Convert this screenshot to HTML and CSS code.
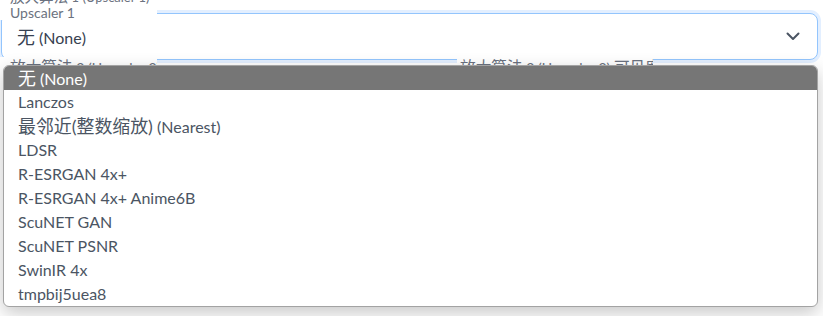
FILE: index.html
```html
<!DOCTYPE html>
<html lang="zh-CN">
<head>
    <meta charset="UTF-8">
    <title>Upscaler</title>
    <link rel="stylesheet" href="styles.css">
</head>
<body>
    <div class="field">
        <div class="label label-top">
            <span class="label-cut"><span class="cjk">放大算法</span> 1 (Upscaler 1)</span>
            <span class="label-name">Upscaler 1</span>
        </div>

        <div class="select">
            <span class="value"><span class="cjk">无</span> (None)</span>
            <svg class="chevron" width="14" height="9" viewBox="0 0 14 9">
                <path d="M1.5 1.5 L7 7 L12.5 1.5" fill="none" stroke="#4b5563" stroke-width="2" stroke-linecap="round" stroke-linejoin="round"/>
            </svg>
        </div>

        <div class="label label-left"><span class="cjk">放大算法</span> 2 (Upscaler 2)</div>
        <div class="label label-right"><span class="cjk">放大算法</span> 2 (Upscaler 2) <span class="cjk">可见度</span></div>

        <ul class="options">
            <li class="selected"><span class="cjk">无</span> (None)</li>
            <li>Lanczos</li>
            <li><span class="cjk">最邻近(整数缩放)</span> (Nearest)</li>
            <li>LDSR</li>
            <li>R-ESRGAN 4x+</li>
            <li>R-ESRGAN 4x+ Anime6B</li>
            <li>ScuNET GAN</li>
            <li>ScuNET PSNR</li>
            <li>SwinIR 4x</li>
            <li>tmpbij5uea8</li>
        </ul>
    </div>
</body>
</html>
```

FILE: styles.css
```css
* {
    margin: 0;
    padding: 0;
    box-sizing: border-box;
}

body {
    font-family: "Lato", "Noto Sans CJK SC", sans-serif;
    background: #ffffff;
    color: #4b5563;
    overflow: hidden;
}

/* 中文字形比西文略大 */
.cjk {
    font-size: 1.12em;
}

.field {
    position: relative;
    padding-top: 13px;
    height: 316px;
}

/* 选择框 */
.select {
    display: flex;
    align-items: center;
    justify-content: space-between;
    height: 47px;
    margin: 0 5px 0 1px;
    padding: 0 17px 0 15px;
    border: 1px solid #93c5fd;
    border-radius: 8px;
    box-shadow: 0 0 0 3px #e3efff;
    background: #fff;
}

.value {
    font-size: 16px;
    color: #374151;
    padding-bottom: 2px;
}

.chevron {
    margin-bottom: 1px;
}

/* 盖在边框上的标签 */
.label {
    position: absolute;
    background: #fff;
    font-size: 13px;
    color: #6b7280;
    white-space: nowrap;
    padding-left: 10px;
}

.label-top {
    top: 0;
    left: 0;
    width: 157px;
    height: 20px;
    overflow: hidden;
}

.label-cut {
    display: block;
    margin-top: -11px;
    line-height: 16px;
}

.label-name {
    display: block;
    font-size: 14px;
    line-height: 15px;
}

.label-left,
.label-right {
    top: 57px;
    height: 12px;
    line-height: 20px;
    overflow: hidden;
    font-size: 14px;
}

.label-left {
    left: 0;
    width: 157px;
}

.label-right {
    left: 457px;
    width: 196px;
    padding-left: 3px;
}

/* 下拉列表 */
.options {
    position: absolute;
    top: 65px;
    left: 3px;
    width: 815px;
    list-style: none;
    background: #fff;
    border: 1px solid #a3a3a3;
    border-radius: 6px;
    overflow: hidden;
    box-shadow: 0 6px 18px rgba(0, 0, 0, 0.22);
}

.options li {
    height: 24px;
    line-height: 24px;
    padding-left: 14px;
    font-size: 16px;
    color: #4b5563;
}

.options li.selected {
    background: #767676;
    color: #fff;
}
```
